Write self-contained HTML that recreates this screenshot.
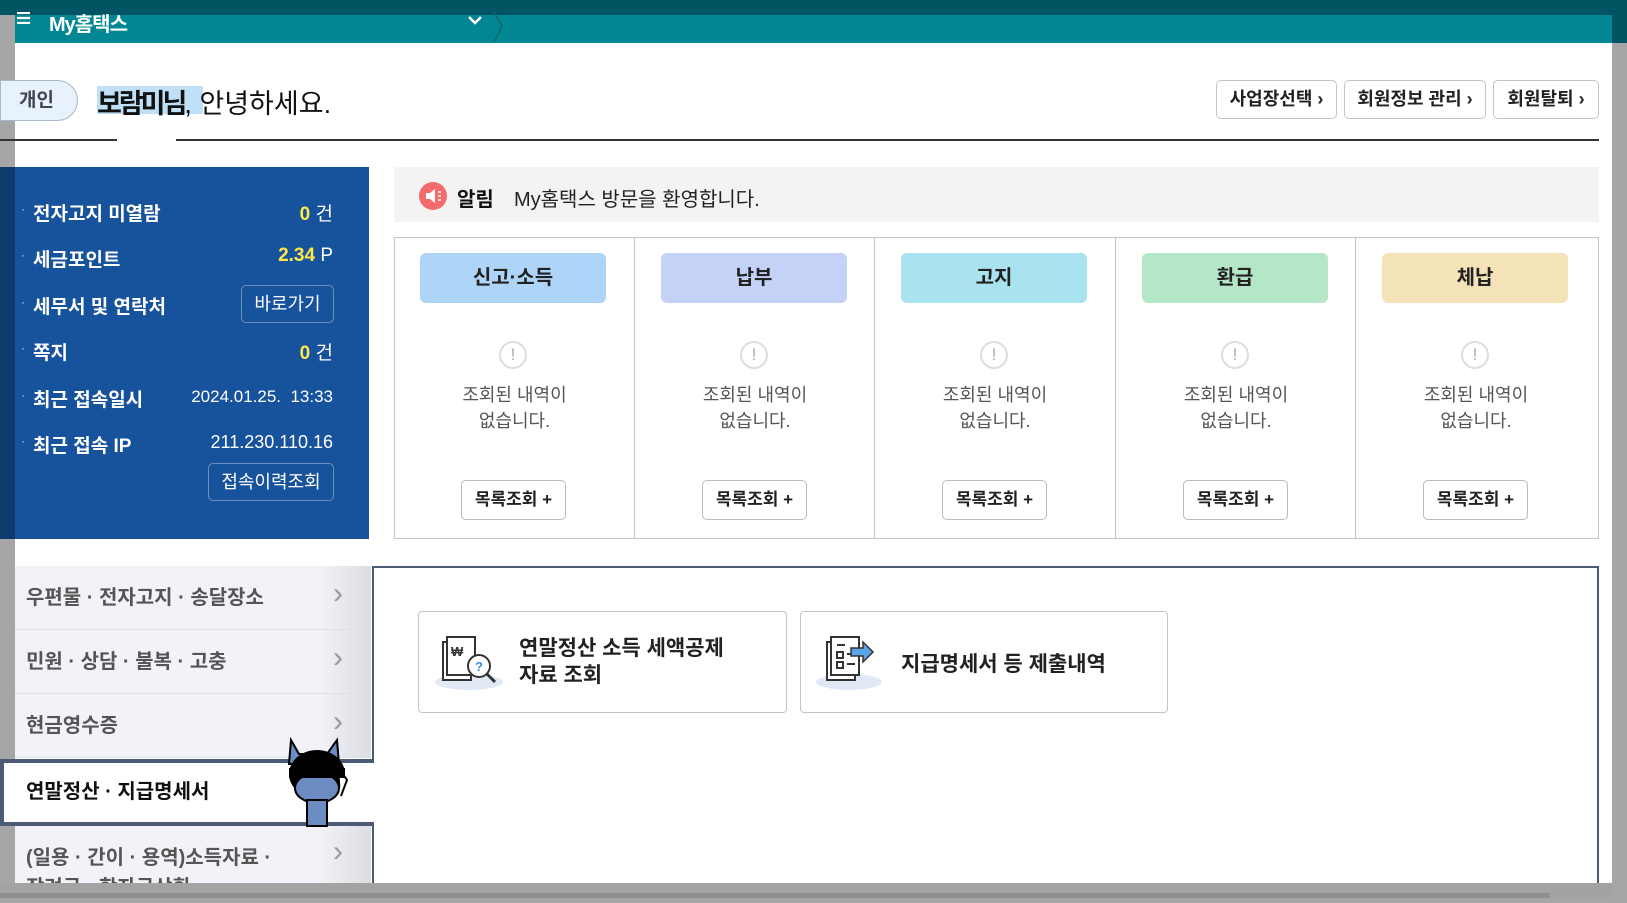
<!DOCTYPE html>
<html><head><meta charset="utf-8"><style>
*{box-sizing:border-box;margin:0;padding:0}
body{width:1627px;height:898px;overflow:hidden;background:#a6a6a6;font-family:"Liberation Sans","Noto Sans CJK KR",sans-serif;position:relative}
.abs{position:absolute}
.panel{left:15px;top:15px;width:1597px;height:868px;background:#fff}
.topband{left:0;top:0;width:1627px;height:15px;background:#015563}
.head{left:15px;top:15px;width:1597px;height:28px;background:#018793}
.btn{border:1px solid #c4c4c4;border-radius:5px;background:#fff;font-size:18px;color:#222;text-align:center;font-weight:bold}
.blue{left:15px;top:167px;width:354px;height:372px;background:#17529c;color:#fff}
.row{position:absolute;left:18px;font-size:19px;font-weight:bold}
.row:before{content:"·";position:absolute;left:-12px;font-weight:normal;font-size:12px;color:#cfd8e8;top:3px}
.val{position:absolute;right:36px;font-size:19px}
.val b{color:#ffe74a}
.bbtn{position:absolute;border:1px solid #6d8fc0;border-radius:5px;font-size:18px;color:#fff;text-align:center}
.col{position:absolute;top:237px;height:302px;width:241px}
.tab{position:absolute;left:26px;top:16px;width:186px;height:50px;border-radius:6px;text-align:center;line-height:50px;font-size:20px;color:#222;font-weight:bold}
.exc{position:absolute;left:105px;top:104px;width:28px;height:28px;border:2px solid #ddd;border-radius:50%;text-align:center;line-height:24px;color:#aaa;font-size:17px}
.msg{position:absolute;left:0;width:100%;top:145px;text-align:center;font-size:18px;line-height:26px;color:#555}
.lb{position:absolute;left:67px;top:243px;width:105px;height:40px;border:1px solid #bbb;border-radius:5px;text-align:center;line-height:38px;font-size:17px;font-weight:bold;color:#222}
.menu{position:absolute;left:15px;width:356px;height:64px;background:linear-gradient(90deg,#f2f3f8 85%,#dcdde2);border-bottom:1px solid #dfe0e6;font-size:20px;color:#555;font-weight:bold;padding-left:11px;line-height:64px}
.menu i{position:absolute;right:28px;top:-4px;font-style:normal;color:#999;font-size:30px;font-weight:normal}
.card{position:absolute;top:611px;height:102px;border:1px solid #c4c4c4;border-radius:4px;background:#fff;font-size:21px;color:#222;font-weight:bold}
</style></head><body>
<div class="abs topband"></div>
<div class="abs panel"></div>
<div class="abs head"></div>
<svg class="abs" style="left:17px;top:12px" width="14" height="12"><path d="M0 1h13M0 6h13M0 11h13" stroke="#fff" stroke-width="2.2"/></svg>
<div class="abs" style="left:49px;top:8px;color:#fff;font-size:20px;font-weight:bold;letter-spacing:-1px">My홈택스</div>
<svg class="abs" style="left:466px;top:12px" width="40" height="32"><path d="M3 5l6 6 6-6" stroke="#fff" stroke-width="2.5" fill="none"/><path d="M28 0l8 14-8 16" stroke="#1d5d66" stroke-width="1.3" fill="none"/></svg>
<div class="abs" style="left:0;top:80px;width:78px;height:41px;border:1px solid #aab8cc;border-radius:0 21px 21px 0;background:#e8f2fc;font-size:19px;color:#445;line-height:39px;padding-left:18px;font-weight:bold">개인</div>
<div class="abs" style="left:97px;top:86px;width:106px;height:28px;background:#bfe0f6"></div>
<div class="abs" style="left:97px;top:82px;font-size:27px;color:#111"><b style="letter-spacing:-3px">보람미님</b>, 안녕하세요.</div>
<div class="abs btn" style="left:1216px;top:80px;width:121px;height:39px;line-height:37px">사업장선택 ›</div>
<div class="abs btn" style="left:1344px;top:80px;width:142px;height:39px;line-height:37px">회원정보 관리 ›</div>
<div class="abs btn" style="left:1493px;top:80px;width:106px;height:39px;line-height:37px">회원탈퇴 ›</div>
<div class="abs" style="left:0;top:139px;width:117px;height:2px;background:#333"></div>
<div class="abs" style="left:176px;top:139px;width:1423px;height:2px;background:#333"></div>
<div class="abs" style="left:0;top:167px;width:15px;height:372px;background:#0e3a6e"></div>
<div class="abs blue">
 <div class="row" style="top:32px">전자고지 미열람</div><div class="val" style="top:32px"><b>0</b> 건</div>
 <div class="row" style="top:78px">세금포인트</div><div class="val" style="top:78px"><b>2.34</b> P</div>
 <div class="row" style="top:125px">세무서 및 연락처</div><div class="bbtn" style="left:226px;top:118px;width:93px;height:38px;line-height:36px">바로가기</div>
 <div class="row" style="top:171px">쪽지</div><div class="val" style="top:171px"><b>0</b> 건</div>
 <div class="row" style="top:218px">최근 접속일시</div><div class="val" style="top:220px;font-size:17px">2024.01.25.&nbsp;&nbsp;13:33</div>
 <div class="row" style="top:264px">최근 접속 IP</div><div class="val" style="top:265px;font-size:18px">211.230.110.16</div>
 <div class="bbtn" style="left:193px;top:296px;width:126px;height:38px;line-height:36px">접속이력조회</div>
</div>
<div class="abs" style="left:394px;top:167px;width:1205px;height:55px;background:#f3f3f3"></div>
<svg class="abs" style="left:419px;top:182px" width="28" height="28"><circle cx="14" cy="14" r="14" fill="#f26c6c"/><path d="M7 11h4l5-4v14l-5-4H7z" fill="#fff"/><path d="M19 10h3M19 14h3M19 18h3" stroke="#fff" stroke-width="1.5"/></svg>
<div class="abs" style="left:457px;top:183px;font-size:20px;font-weight:bold;color:#111">알림</div>
<div class="abs" style="left:514px;top:183px;font-size:20px;color:#222">My홈택스 방문을 환영합니다.</div>
<div class="abs" style="left:394px;top:237px;width:1205px;height:302px;border:1px solid #c4c4c4"></div>
<div class="col" style="left:394px"><div class="tab" style="background:#aed4f8">신고·소득</div><div class="exc">!</div><div class="msg">조회된 내역이<br>없습니다.</div><div class="lb">목록조회 +</div></div>
<div class="col" style="left:634px;border-left:1px solid #c4c4c4"><div class="tab" style="background:#c4d2f8">납부</div><div class="exc">!</div><div class="msg">조회된 내역이<br>없습니다.</div><div class="lb">목록조회 +</div></div>
<div class="col" style="left:874px;border-left:1px solid #c4c4c4"><div class="tab" style="background:#a9e3f0">고지</div><div class="exc">!</div><div class="msg">조회된 내역이<br>없습니다.</div><div class="lb">목록조회 +</div></div>
<div class="col" style="left:1115px;border-left:1px solid #c4c4c4"><div class="tab" style="background:#b4e7c8">환급</div><div class="exc">!</div><div class="msg">조회된 내역이<br>없습니다.</div><div class="lb">목록조회 +</div></div>
<div class="col" style="left:1355px;border-left:1px solid #c4c4c4"><div class="tab" style="background:#f4e2b8">체납</div><div class="exc">!</div><div class="msg">조회된 내역이<br>없습니다.</div><div class="lb">목록조회 +</div></div>
<div class="menu" style="top:566px">우편물 · 전자고지 · 송달장소<i>›</i></div>
<div class="menu" style="top:630px">민원 · 상담 · 불복 · 고충<i>›</i></div>
<div class="menu" style="top:694px">현금영수증<i>›</i></div>
<div class="menu" style="top:825px;line-height:30px;padding-top:18px;height:70px">(일용 · 간이 · 용역)소득자료 ·<br>장려금 · 학자금상환<i style="top:12px">›</i></div>
<div class="abs" style="left:372px;top:566px;width:1227px;height:330px;border:2px solid #4d5a75;border-bottom:none;background:#fff"></div>
<div class="abs" style="left:0;top:759px;width:374px;height:67px;border:4px solid #4d5a75;border-right:none;background:#fff;font-size:20px;font-weight:bold;color:#111;line-height:59px;padding-left:22px">연말정산 · 지급명세서</div>
<svg class="abs" style="left:277px;top:732px" width="86" height="96"><path d="M14 8l8 14h28l10-14 2 24H12z" fill="#6a8cc0" stroke="#000" stroke-width="2"/><ellipse cx="40" cy="42" rx="28" ry="24" fill="#000"/><ellipse cx="40" cy="56" rx="22" ry="15" fill="#6a8cc0" stroke="#000" stroke-width="2"/><rect x="30" y="68" width="20" height="26" fill="#6a8cc0" stroke="#000" stroke-width="2"/><path d="M62 36l8 12-6 16" fill="#fff" stroke="#000" stroke-width="2"/><rect x="12" y="36" width="56" height="10" fill="#000"/></svg>
<div class="card" style="left:418px;width:369px"><svg class="abs" style="left:14px;top:22px" width="70" height="60"><ellipse cx="36" cy="48" rx="34" ry="8" fill="#e1e9f6"/><rect x="10" y="8" width="28" height="38" fill="#fff" stroke="#333" stroke-width="2"/><rect x="14" y="3" width="28" height="38" fill="#fff" stroke="#333" stroke-width="2"/><text x="18" y="22" font-size="13" font-weight="bold" fill="#333">₩</text><circle cx="46" cy="32" r="11" fill="#fff" stroke="#333" stroke-width="2"/><text x="42" y="37" font-size="13" fill="#3a8ee0" font-weight="bold">?</text><path d="M54 40l8 8" stroke="#333" stroke-width="3"/></svg><div class="abs" style="left:100px;top:23px;line-height:27px">연말정산 소득 세액공제<br>자료 조회</div></div>
<div class="card" style="left:800px;width:368px"><svg class="abs" style="left:14px;top:22px" width="70" height="60"><ellipse cx="34" cy="48" rx="33" ry="8" fill="#e1e9f6"/><rect x="12" y="8" width="28" height="38" fill="#fff" stroke="#333" stroke-width="2"/><rect x="16" y="3" width="28" height="38" fill="#fff" stroke="#333" stroke-width="2"/><path d="M22 11h8M22 18h6v6h-6zM22 28h6v6h-6zM32 20h8M32 30h8" stroke="#333" stroke-width="2" fill="none"/><path d="M36 14h12v-6l10 10-10 10v-6h-12z" fill="#5aa5e6" stroke="#333" stroke-width="1.5"/></svg><div class="abs" style="left:100px;top:36px">지급명세서 등 제출내역</div></div>
<div class="abs" style="left:0;top:883px;width:1627px;height:15px;background:#a3a3a3"></div>
<div class="abs" style="left:0;top:893px;width:1550px;height:5px;background:#8e8e8e"></div>
<div class="abs" style="left:1612px;top:15px;width:15px;height:883px;background:#a6a6a6"></div>
<div class="abs" style="left:1612px;top:0;width:15px;height:43px;background:#015563"></div>
</body></html>
